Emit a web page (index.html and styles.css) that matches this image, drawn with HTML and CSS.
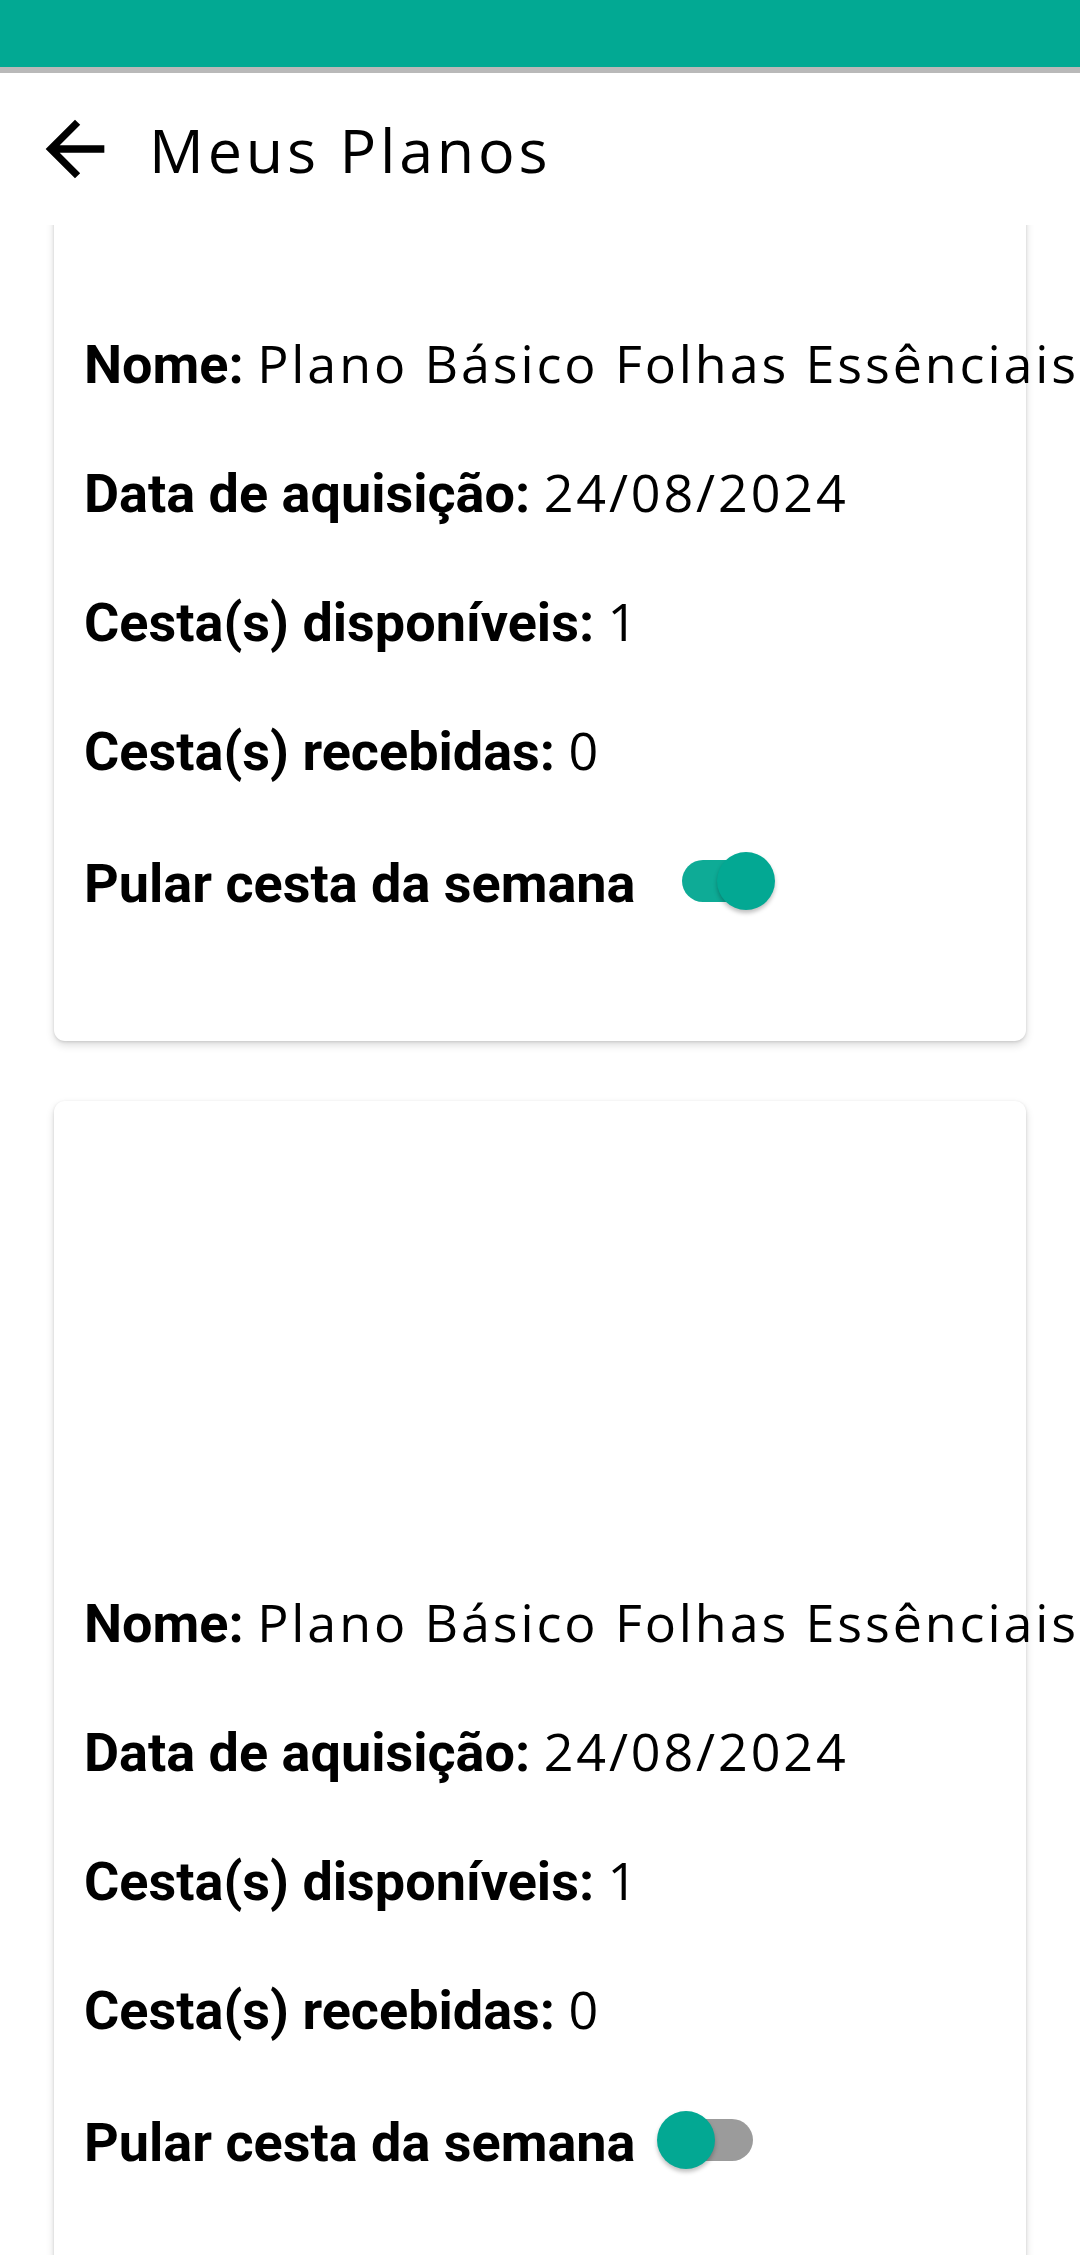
FILE: index.html
```html
<!DOCTYPE html>
<html lang="pt-BR">
<head>
<meta charset="utf-8">
<title>Meus Planos</title>
<link rel="stylesheet" href="styles.css">
</head>
<body>
<div class="statusbar"></div>
<header class="appbar">
  <svg class="back" viewBox="0 0 24 24" aria-label="Voltar"><path d="M20 11H7.83l5.59-5.59L12 4l-8 8 8 8 1.41-1.41L7.83 13H20v-2z"/></svg>
  <h1 class="title">Meus Planos</h1>
</header>
<main class="scroller">
  <div class="list">
    <section class="card">
      <div class="card-media"></div>
      <div class="row"><span class="label">Nome:</span> <span class="value">Plano Básico Folhas Essênciais</span></div>
      <div class="row"><span class="label">Data de aquisição:</span> <span class="value">24/08/2024</span></div>
      <div class="row"><span class="label">Cesta(s) disponíveis:</span> <span class="value">1</span></div>
      <div class="row"><span class="label">Cesta(s) recebidas:</span> <span class="value">0</span></div>
      <div class="row-switch">
        <span class="label">Pular cesta da semana</span>
        <span class="switch on"><span class="track"></span><span class="thumb"></span></span>
      </div>
    </section>
    <section class="card">
      <div class="card-media"></div>
      <div class="row"><span class="label">Nome:</span> <span class="value">Plano Básico Folhas Essênciais</span></div>
      <div class="row"><span class="label">Data de aquisição:</span> <span class="value">24/08/2024</span></div>
      <div class="row"><span class="label">Cesta(s) disponíveis:</span> <span class="value">1</span></div>
      <div class="row"><span class="label">Cesta(s) recebidas:</span> <span class="value">0</span></div>
      <div class="row-switch">
        <span class="label">Pular cesta da semana</span>
        <span class="switch off"><span class="track"></span><span class="thumb"></span></span>
      </div>
    </section>
  </div>
</main>
</body>
</html>
```
FILE: styles.css
```css
html, body {
  margin: 0;
  padding: 0;
  background: #ffffff;
}
body {
  width: 1080px;
  height: 2255px;
  overflow: hidden;
  display: flex;
  flex-direction: column;
  font-family: Roboto, "Liberation Sans", sans-serif;
  color: #000;
}
.statusbar {
  flex: none;
  height: 67px;
  background: #02a993;
  border-bottom: 6px solid #b9b9b9;
}
.appbar {
  flex: none;
  height: 152px;
  display: flex;
  align-items: center;
  padding-left: 31px;
  background: #fff;
  position: relative;
  z-index: 2;
}
.back {
  width: 88px;
  height: 88px;
  fill: #000;
  flex: none;
}
.title {
  margin: 0 0 0 30px;
  font-family: "Open Sans", Lato, sans-serif;
  font-weight: 400;
  font-size: 61px;
  letter-spacing: 3.8px;
  color: #000;
}
.scroller {
  flex: 1;
  overflow: hidden;
  position: relative;
  z-index: 1;
}
.list {
  margin-top: -383px;
  padding: 0 54px;
  display: flex;
  flex-direction: column;
  gap: 60px;
}
.card {
  background: #fff;
  border-radius: 11px;
  box-shadow: 0 4px 8px rgba(0,0,0,0.14), 0 1px 3px rgba(0,0,0,0.12);
  padding: 0 0 88px 30px;
}
.card-media {
  height: 456px;
}
.row {
  height: 129px;
  line-height: 129px;
  font-size: 54px;
  white-space: nowrap;
}
.label {
  font-family: Roboto, "Liberation Sans", sans-serif;
  font-weight: 700;
  font-size: 54px;
}
.value {
  font-family: "Open Sans", Lato, sans-serif;
  font-weight: 400;
  font-size: 52px;
  letter-spacing: 2.9px;
}
.row-switch {
  height: 139px;
  display: flex;
  align-items: center;
  white-space: nowrap;
}
.row-switch .label {
  line-height: normal;
}
.switch {
  position: relative;
  flex: none;
  width: 119px;
  height: 58px;
  margin-left: 21px;
  margin-bottom: 6px;
}
.track {
  position: absolute;
  left: 25px;
  top: 8px;
  width: 71px;
  height: 42px;
  border-radius: 21px;
}
.thumb {
  position: absolute;
  top: 0;
  width: 58px;
  height: 58px;
  border-radius: 50%;
  background: #03a893;
  box-shadow: 0 3px 4px rgba(0,0,0,0.25);
}
.switch.on .track { background: #0eab96; }
.switch.on .thumb { left: 60px; }
.switch.off .track { background: #9b9b9b; }
.switch.off .thumb { left: 0; }
```
